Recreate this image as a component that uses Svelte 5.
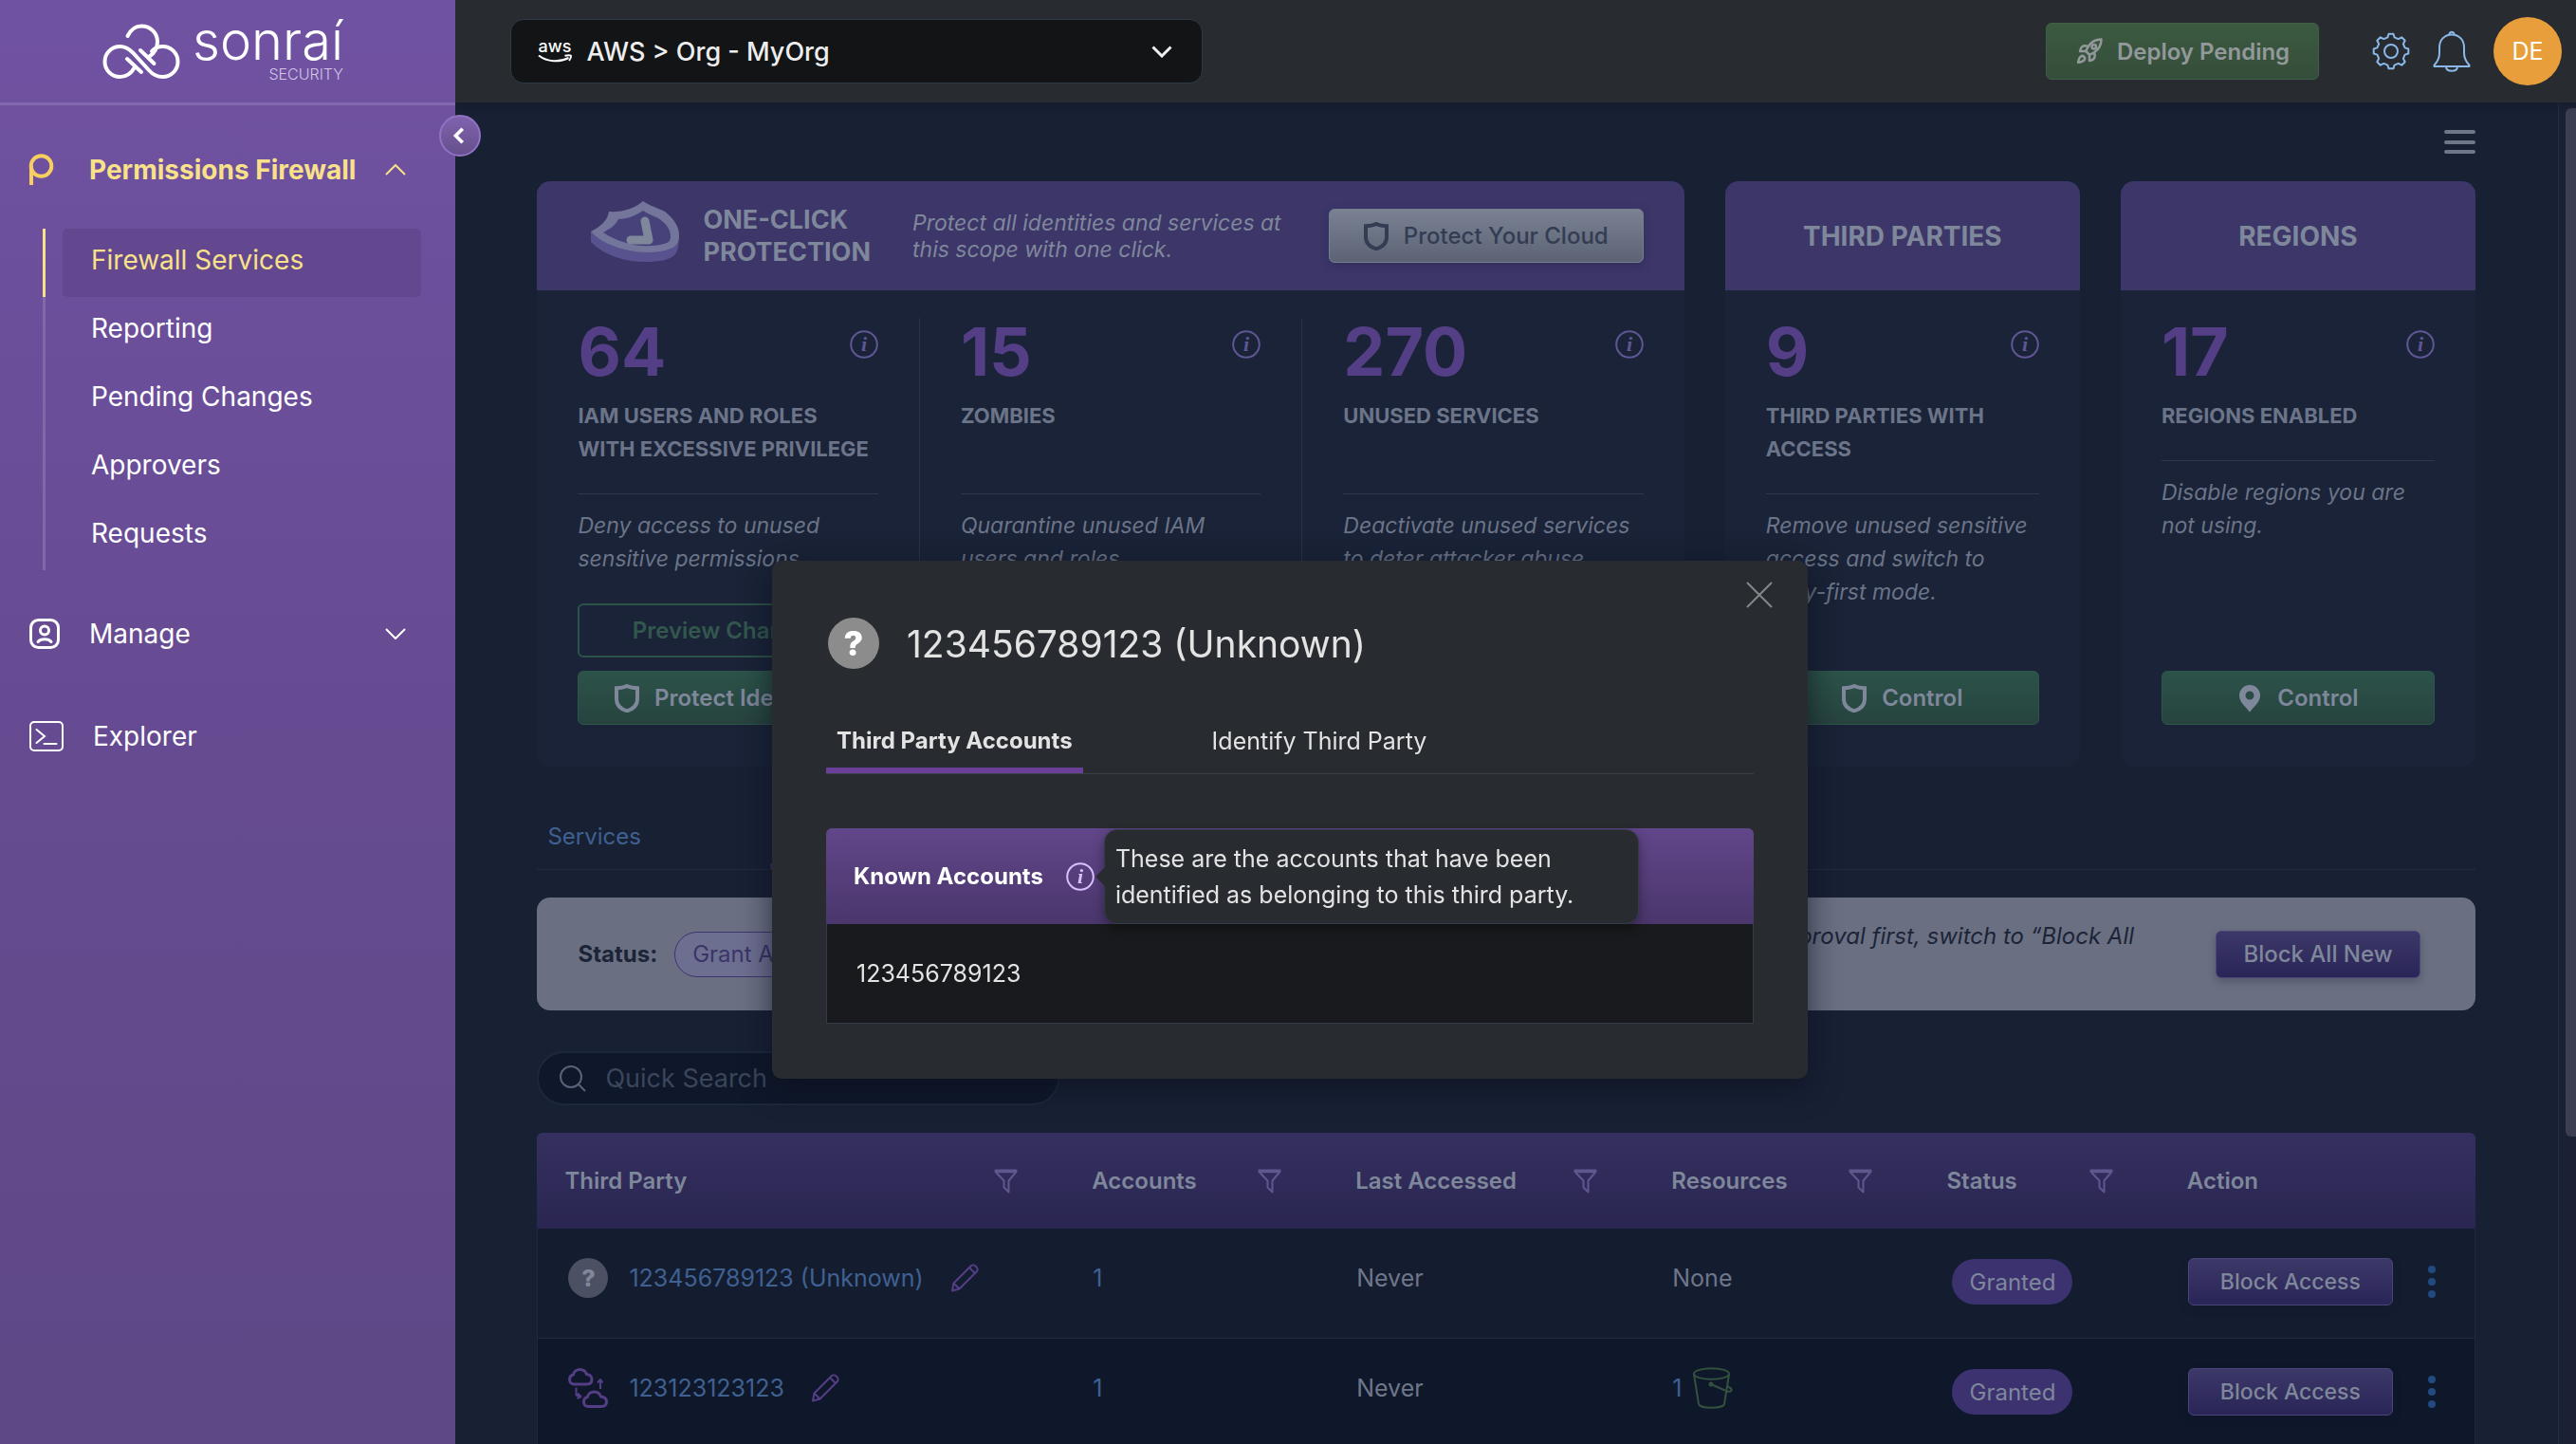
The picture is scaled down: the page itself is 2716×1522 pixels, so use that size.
<script>
  const menu = ['Firewall Services', 'Reporting', 'Pending Changes', 'Approvers', 'Requests'];

  const stats = [
    {
      value: 64,
      label: 'IAM users and roles with excessive privilege',
      text: 'Deny access to unused sensitive permissions.',
      preview: 'Preview Changes',
      action: 'Protect Identities',
      icon: 'shield'
    },
    { value: 15, label: 'Zombies', text: 'Quarantine unused IAM users and roles.' },
    { value: 270, label: 'Unused services', text: 'Deactivate unused services to deter attacker abuse.' }
  ];
  const thirdParties = {
    value: 9,
    label: 'Third parties with access',
    text: 'Remove unused sensitive access and switch to deny-first mode.',
    action: 'Control',
    icon: 'shield'
  };
  const regions = {
    value: 17,
    label: 'Regions enabled',
    text: 'Disable regions you are not using.',
    action: 'Control',
    icon: 'pin',
    short: true
  };

  const columns = ['Third Party', 'Accounts', 'Last Accessed', 'Resources', 'Status', 'Action'];
  const rows = [
    { name: '123456789123 (Unknown)', unknown: true, accounts: 1, last: 'Never', buckets: 0 },
    { name: '123123123123', unknown: false, accounts: 1, last: 'Never', buckets: 1 }
  ];

  // Cog outline: eight teeth, each with a flat top and sloped sides.
  const teeth = 8;
  const gear = Array.from({ length: teeth }, (_, i) => {
    const step = (Math.PI * 2) / teeth;
    return [[-0.31, 15], [-0.17, 18.5], [0.17, 18.5], [0.31, 15]]
      .map(([k, r]) => {
        const a = i * step + k * step - Math.PI / 2;
        return `${(20 + r * Math.cos(a)).toFixed(1)},${(20 + r * Math.sin(a)).toFixed(1)}`;
      })
      .join(' ');
  }).join(' ');

  let query = $state('');
  let scope = $state('AWS > Org - MyOrg');
</script>

{#snippet shield()}
  <svg class="i-shield" viewBox="0 0 26 30" aria-hidden="true">
    <path d="M13 2 C10.500 3.300 6 4.200 2 4.200 V16 C2 23 7 26.500 13 28.300 C19 26.500 24 23 24 16 V4.200 C20 4.200 15.500 3.300 13 2 Z" />
  </svg>
{/snippet}

{#snippet pin()}
  <svg class="i-pin" viewBox="0 0 26 30" aria-hidden="true">
    <path fill-rule="evenodd" d="M13 1 A11 11 0 0 0 2 12 C2 19 8 23 13 29.500 C18 23 24 19 24 12 A11 11 0 0 0 13 1 Z M13 7.500 A4.500 4.500 0 1 1 13 16.500 A4.500 4.500 0 1 1 13 7.500 Z" />
  </svg>
{/snippet}

{#snippet info()}
  <svg class="i-info" viewBox="0 0 30 30" aria-hidden="true">
    <circle cx="15" cy="15" r="13.800" />
    <text x="15" y="22" text-anchor="middle">i</text>
  </svg>
{/snippet}

{#snippet stat(s)}
  <div class="stat">
    <div class="stat-top">
      <strong class="number">{s.value}</strong>
      <button class="plain info-btn" aria-label="About {s.label}">{@render info()}</button>
    </div>
    <h3 class="label" class:short={s.short}>{s.label}</h3>
    <p class="desc">{s.text}</p>
    <div class="stat-actions">
      {#if s.preview}<button class="btn outline">{s.preview}</button>{/if}
      {#if s.action}
        <button class="btn green">
          {#if s.icon === 'pin'}{@render pin()}{:else}{@render shield()}{/if}
          {s.action}
        </button>
      {/if}
    </div>
  </div>
{/snippet}

<div class="shell">
  <aside class="sidebar">
    <div class="brand">
      <svg class="brand-mark" viewBox="0 0 80 58" aria-hidden="true">
        <path d="M33 46 C29 53 24 56 17.500 56 A16 16 0 0 1 17.500 24 C23 24 27 26.500 31 30.500 L48 49 C52 53.500 56 56 62.500 56 A16 16 0 0 0 62.500 24 C58 24 54 25.500 51 29" />
        <path d="M25.500 13 C29 6 34 2.500 40 2.500 C50 2.500 57 10 57 19 C57 26 54 31 48 35" />
        <path d="M39 28 L53.500 42 M25 37 L40 51" />
      </svg>
      <div class="wordmark">
        <span class="name">sonraí</span>
        <span class="sub">SECURITY</span>
      </div>
    </div>
    <button class="collapse" aria-label="Collapse menu">
      <svg viewBox="0 0 44 44" aria-hidden="true"><path d="M25 14 L17 22 L25 30" /></svg>
    </button>
    <nav class="nav" aria-label="Main">
      <button class="plain nav-item current">
        <svg class="nav-icon" viewBox="0 0 32 32" aria-hidden="true">
          <circle cx="12.500" cy="12" r="10.800" />
          <path d="M2 12 V32" />
        </svg>
        <span class="nav-text">Permissions Firewall</span>
        <svg class="nav-chevron" viewBox="0 0 22 12" aria-hidden="true"><path d="M1 11 L11 1 L21 11" /></svg>
      </button>
      <ul class="submenu">
        {#each menu as m, i}
          <li><a href="#{m.toLowerCase().replace(' ', '-')}" class:active={i === 0}>{m}</a></li>
        {/each}
      </ul>
      <button class="plain nav-item">
        <svg class="nav-icon person" viewBox="0 0 32 32" aria-hidden="true">
          <rect x="1.500" y="1.500" width="29" height="29" rx="8" />
          <circle cx="16" cy="12.500" r="4.500" />
          <path d="M9 24.500 C12 20.800 20 20.800 23 24.500" />
        </svg>
        <span class="nav-text">Manage</span>
        <svg class="nav-chevron" viewBox="0 0 22 12" aria-hidden="true"><path d="M1 1 L11 11 L21 1" /></svg>
      </button>
      <a class="nav-item explorer" href="#explorer">
        <svg class="nav-icon wide" viewBox="0 0 36 32" aria-hidden="true">
          <rect x="1" y="1" width="34" height="30" rx="4" />
          <path d="M7.500 9 L16 16 L7.500 23 M15.500 24 H28.500" />
        </svg>
        <span class="nav-text">Explorer</span>
      </a>
    </nav>
  </aside>

  <div class="page">
    <header class="topbar">
      <div class="scope">
        <svg class="aws" viewBox="0 0 36 23" aria-hidden="true">
          <text x="18" y="12" text-anchor="middle">aws</text>
          <path class="swoosh" d="M1 15.500 C10 22.500 23 23 32.500 18" />
          <path class="swoosh" d="M28.500 15.800 C32 15 35 15 35 16 C35.200 17.500 34.200 19.500 33 21" />
        </svg>
        <select aria-label="Scope" bind:value={scope}>
          <option>AWS &gt; Org - MyOrg</option>
        </select>
        <svg class="scope-chevron" viewBox="0 0 22 13" aria-hidden="true"><path d="M1.500 1.500 L11 11 L20.500 1.500" /></svg>
      </div>
      <button class="deploy">
        <svg viewBox="0 0 24 24" aria-hidden="true">
          <path d="M4.500 16.500c-1.500 1.260-2 5-2 5s3.740-.5 5-2c.71-.84.7-2.130-.09-2.910a2.180 2.180 0 0 0-2.910-.09z" />
          <path d="m12 15-3-3a22 22 0 0 1 2-3.950A12.880 12.880 0 0 1 22 2c0 2.720-.78 7.500-6 11a22.350 22.350 0 0 1-4 2z" />
          <path d="M9 12H4s.55-3.030 2-4c1.620-1.080 5 0 5 0M12 15v5s3.030-.55 4-2c1.080-1.620 0-5 0-5" />
          <circle cx="15.800" cy="8.200" r="1.800" />
        </svg>
        Deploy Pending
      </button>
      <div class="tools">
        <button class="plain tool" aria-label="Settings">
          <svg viewBox="0 0 40 40" aria-hidden="true"><polygon points={gear} /><circle cx="20" cy="20" r="7" /></svg>
        </button>
        <button class="plain tool" aria-label="Notifications">
          <svg viewBox="0 0 40 44" aria-hidden="true">
            <path d="M20 4.500 C12 4.500 7 10.500 7 18 V24 C7 29 5 33 1.500 36.800 V38 H38.500 V36.800 C35 33 33 29 33 24 V18 C33 10.500 28 4.500 20 4.500 Z" />
            <path d="M17.500 4.500 C17.500 0.800 22.500 0.800 22.500 4.500 M14 39 C15 44 25 44 26 39" />
          </svg>
        </button>
        <button class="avatar" aria-label="Account DE">DE</button>
      </div>
    </header>

    <div class="body">
      <main class="content">
        <div class="menu-row">
          <button class="plain burger" aria-label="Menu"><span></span><span></span><span></span></button>
        </div>

        <section class="cards">
          <article class="card">
            <header class="card-head protection">
              <svg class="badge" viewBox="0 0 94 64" aria-hidden="true">
                <path class="side" d="M0 32 V43 C14 57 34 64 58 64 C72 64 82 62 88 57 C92 53 93 45 93 34 Z" />
                <path class="face" d="M55 0 C60 4 70 7 78 11 C88 19 93 27 93 36 C93 44 90 48 84 50 C72 55 52 55 36 51 C20 47 8 41 0 32 C10 27 18 20 19 11 C32 12 46 8 55 0 Z" />
                <path class="inner" d="M55 10 C59 13 65 15 71 18 C80 24 84 30 84 37 C84 42 82 44 77 45 C66 48 52 48 41 45 C29 42 20 38 13 33 C21 29 27 24 29 19 C38 19 48 15 55 10 Z" />
                <path class="tick" d="M57 21 L61 41 H42" />
              </svg>
              <h2>ONE-CLICK<br />PROTECTION</h2>
              <p>Protect all identities and services at this scope with one click.</p>
              <button class="btn silver">{@render shield()}Protect Your Cloud</button>
            </header>
            <div class="stats">
              {#each stats as s}{@render stat(s)}{/each}
            </div>
          </article>
          <article class="card">
            <header class="card-head"><h2>THIRD PARTIES</h2></header>
            <div class="stats">{@render stat(thirdParties)}</div>
          </article>
          <article class="card">
            <header class="card-head"><h2>REGIONS</h2></header>
            <div class="stats">{@render stat(regions)}</div>
          </article>
        </section>

        <div class="tabs dim" role="tablist" aria-label="Sections">
          <button role="tab" aria-selected="false">Services</button>
          <button role="tab" aria-selected="true">Third Parties</button>
        </div>

        <section class="status">
          <b>Status:</b>
          <span class="pill outlined">Grant Access</span>
          <p>To require approval first, switch to “Block All<br />New”.</p>
          <button class="btn violet all">Block All New</button>
        </section>

        <label class="search">
          <svg viewBox="0 0 28 28" aria-hidden="true"><circle cx="12" cy="12" r="11" /><path d="M20 20 L27 27" /></svg>
          <input type="search" placeholder="Quick Search" aria-label="Quick Search" bind:value={query} />
        </label>

        <div class="grid-wrap">
          <table class="grid">
            <colgroup>
              <col class="c1" /><col class="c2" /><col class="c3" /><col class="c4" /><col class="c5" /><col class="c6" />
            </colgroup>
            <thead>
              <tr>
                {#each columns as c, i}
                  <th scope="col">
                    <div class="th">
                      {c}
                      {#if i < columns.length - 1}
                        <button class="plain filter" aria-label="Filter {c}">
                          <svg viewBox="0 0 25 26" aria-hidden="true"><path d="M1.500 1.500 H23.500 V3 L15.500 12.500 V24.500 L10.500 19.500 V12.500 L1.500 3 Z M2 3.200 H23" /></svg>
                        </button>
                      {/if}
                    </div>
                  </th>
                {/each}
              </tr>
            </thead>
            <tbody>
              {#each rows as r}
                <tr>
                  <td>
                    <div class="party">
                      {#if r.unknown}
                        <span class="unknown">?</span>
                      {:else}
                        <svg class="clouds" viewBox="0 0 42 42" aria-hidden="true">
                          <path d="M6.500 17 C3 17 1.500 14.500 1.500 12 C1.500 9.500 3 7.500 5.500 7 C6 3.500 9 1.500 12.500 1.500 C16 1.500 18.500 3.500 19.500 6.500 C23 7 25 9 25 12 C25 15 23 17 19.500 17 Z" />
                          <path d="M21.500 40.500 C18 40.500 16.500 38 16.500 35.500 C16.500 33 18 31 20.500 30.500 C21 27 24 25 27.500 25 C31 25 33.500 27 34.500 30 C38 30.500 40.500 32.500 40.500 35.500 C40.500 38.500 38.500 40.500 35 40.500 Z" />
                          <path d="M34 22 V13 M31 15.500 L34 12 L36.500 15.500 M8.500 20.500 V28.500 L13 30 M10 26.500 L13.500 30 L9.500 32" />
                        </svg>
                      {/if}
                      <a href="#party">{r.name}</a>
                      <button class="plain pencil" aria-label="Rename {r.name}">
                        <svg viewBox="0 0 30 30" aria-hidden="true">
                          <path d="M2 28.500 L3.500 20.500 L21.500 2.500 C23 1 25 1 26.500 2.500 L27.500 3.500 C29 5 29 7 27.500 8.500 L9.500 26.500 Z M3.500 20.500 L9.500 26.500 M20 4 L26 10" />
                        </svg>
                      </button>
                    </div>
                  </td>
                  <td><div class="cell"><a href="#accounts">{r.accounts}</a></div></td>
                  <td><div class="cell">{r.last}</div></td>
                  <td>
                    <div class="cell res">
                      {#if r.buckets}
                        <a href="#resources">{r.buckets}</a>
                        <svg class="bucket" viewBox="0 0 42 44" aria-hidden="true">
                          <ellipse cx="19.500" cy="7" rx="18.500" ry="5.800" />
                          <path d="M1 7.500 L6 39 C7 44 32 44 33 39 L38 7.500 M19 18 L36 25.500 C42 27 42 23 37 20.500" />
                          <circle class="dot" cx="19" cy="18" r="1.500" />
                        </svg>
                      {:else}None{/if}
                    </div>
                  </td>
                  <td><div class="acts"><span class="pill solid">Granted</span></div></td>
                  <td>
                    <div class="acts">
                      <button class="btn violet">Block Access</button>
                      <button class="plain more" aria-label="More actions"><i></i><i></i><i></i></button>
                    </div>
                  </td>
                </tr>
              {/each}
            </tbody>
          </table>
        </div>
      </main>
      <div class="track" aria-hidden="true"><span class="thumb"></span></div>
    </div>
  </div>
</div>

<div class="overlay">
  <div class="modal" role="dialog" aria-modal="true" aria-labelledby="modal-title">
    <button class="plain close" aria-label="Close">
      <svg viewBox="0 0 28 28" aria-hidden="true"><path d="M1 1 L27 27 M27 1 L1 27" /></svg>
    </button>
    <header class="modal-head">
      <span class="unknown big">?</span>
      <h1 id="modal-title">123456789123 (Unknown)</h1>
    </header>
    <div class="tabs" role="tablist" aria-label="Third party">
      <button role="tab" aria-selected="true">Third Party Accounts</button>
      <button role="tab" aria-selected="false">Identify Third Party</button>
    </div>
    <table class="known">
      <thead>
        <tr>
          <th scope="col">
            <div class="known-head">
              Known Accounts
              <span class="tip-anchor">
                {@render info()}
                <span class="tip" role="tooltip">These are the accounts that have been identified as belonging to this third party.</span>
              </span>
            </div>
          </th>
        </tr>
      </thead>
      <tbody><tr><td>123456789123</td></tr></tbody>
    </table>
  </div>
</div>

<style>
  :global(body) {
    background: #182034;
    overflow: hidden;
  }
  .shell, .overlay {
    font-family: Inter, 'Noto Sans', sans-serif;
    font-size: 25px;
  }
  .shell *, .overlay * { box-sizing: border-box; }
  .shell :is(h2, h3, p, ul), .overlay h1 { margin: 0; padding: 0; }
  button, input, select { font: inherit; color: inherit; }
  button { cursor: pointer; }
  a { text-decoration: none; color: inherit; }
  svg { display: block; flex: none; fill: none; }
  .plain { border: 0; background: none; padding: 0; }

  .shell { display: flex; height: 100vh; overflow: hidden; }

  /* Sidebar */
  .sidebar {
    position: relative;
    z-index: 2;
    flex: 0 0 480px;
    background: linear-gradient(#7052a2, #664b92 50%, #5e4885);
    color: #fff;
    font-size: 28px;
  }
  .brand {
    display: flex;
    align-items: center;
    gap: 14px;
    height: 111px;
    padding-left: 109px;
    border-bottom: 3px solid #8468ae;
  }
  .brand-mark { width: 80px; height: 58px; stroke: #fff; stroke-width: 4; stroke-linecap: round; overflow: visible; }
  .wordmark { display: flex; flex-direction: column; align-items: flex-end; padding-bottom: 6px; }
  .name { font-size: 56px; line-height: 54px; font-weight: 300; }
  .sub { font-size: 16px; line-height: 16px; font-weight: 300; color: #d3c6e6; }
  .collapse {
    position: absolute;
    top: 121px;
    right: -27px;
    width: 44px;
    height: 44px;
    padding: 0;
    border: 2px solid #9173c4;
    border-radius: 50%;
    background: linear-gradient(#8062ae, #66508c);
  }
  .collapse svg { width: 100%; stroke: #fff; stroke-width: 4; }
  .nav { padding-top: 32px; }
  .nav-item {
    display: flex;
    align-items: center;
    gap: 31px;
    width: 100%;
    height: 72px;
    padding: 0 52px 0 31px;
    color: #fff;
    text-align: left;
    white-space: nowrap;
  }
  .nav-text { flex: 1; min-width: 0; }
  .nav-icon { width: 32px; height: 32px; stroke: currentColor; stroke-width: 3; stroke-linecap: round; }
  .nav-icon.wide { width: 36px; stroke-width: 2; }
  .nav-chevron { width: 22px; height: 12px; stroke: currentColor; stroke-width: 2; }
  .current { color: #f9e189; font-weight: 700; }
  .current .nav-icon { stroke-linecap: butt; stroke-width: 4; color: #f7cf60; overflow: visible; }
  .explorer { margin-top: 36px; }
  .submenu {
    list-style: none;
    margin: 26px 36px 31px 45px !important;
    border-left: 3px solid #8367ab;
  }
  .submenu a {
    position: relative;
    display: flex;
    align-items: center;
    height: 72px;
    margin-left: 18px;
    padding: 0 0 6px 30px;
    border-radius: 5px;
  }
  .submenu .active { background: #63488f; color: #f9e189; }
  .submenu .active::before {
    content: '';
    position: absolute;
    left: -21px;
    top: 0;
    bottom: 0;
    width: 3px;
    background: #f9e189;
  }

  /* Top bar */
  .page { flex: 1; min-width: 0; display: flex; flex-direction: column; }
  .topbar {
    position: relative;
    z-index: 1;
    flex: 0 0 108px;
    display: flex;
    align-items: center;
    padding: 0 15px 0 58px;
    background: #282b2f;
    box-shadow: 0 2px 8px #10162680;
  }
  .scope {
    display: flex;
    align-items: center;
    gap: 15px;
    flex: 0 1 730px;
    height: 68px;
    padding: 0 31px 0 28px;
    border: 1px solid #303a47;
    border-radius: 14px;
    background: #121416;
    color: #eee;
    font-size: 27px;
    font-weight: 500;
  }
  .scope select { flex: 1; min-width: 0; border: 0; padding: 0; background: none; appearance: none; outline: 0; }
  .aws { width: 36px; height: 23px; overflow: visible; }
  .aws text { font: 500 18px Inter, sans-serif; fill: #fff; }
  .aws .swoosh { stroke: #fff; stroke-width: 2; }
  .scope-chevron { width: 22px; height: 13px; stroke: #eee; stroke-width: 3; }
  .deploy {
    display: flex;
    align-items: center;
    justify-content: center;
    gap: 14px;
    width: 288px;
    height: 60px;
    margin-left: auto;
    padding: 0;
    border: 1px solid #3e6145;
    border-radius: 6px;
    background: linear-gradient(#3b5a40, #354d3b);
    color: #93999a;
    font-size: 24px;
    font-weight: 600;
  }
  .deploy svg { width: 30px; height: 30px; stroke: currentColor; stroke-width: 2; stroke-linejoin: round; }
  .tools { display: flex; align-items: center; gap: 24px; margin-left: 56px; }
  .tool svg { width: 40px; stroke: #8bb8ea; stroke-width: 2; stroke-linejoin: round; }
  .avatar {
    width: 72px;
    height: 72px;
    padding: 0;
    border: 0;
    border-radius: 50%;
    background: #e89f3b;
    color: #fff;
    font-size: 25px;
  }

  /* Content */
  .body { flex: 1; min-height: 0; display: flex; background: #182034; }
  .content { flex: 1; min-width: 0; padding: 29px 87px 0 86px; overflow: hidden; }
  .track { flex: 0 0 19px; padding: 6px 0 0 7px; background: #1b2135; border-left: 1px solid #252d42; }
  .thumb { display: block; height: 77%; border-radius: 6px 0 0 6px; background: #3c3f52; }
  .menu-row { display: flex; justify-content: flex-end; margin-bottom: 29px; }
  .burger { display: flex; flex-direction: column; justify-content: space-between; width: 33px; height: 25px; }
  .burger span { height: 4px; border-radius: 2px; background: #6e7688; }

  .cards { display: grid; grid-template-columns: 1209fr 374fr 374fr; gap: 43px; }
  .card { display: flex; flex-direction: column; border-radius: 14px; background: #1a2337; overflow: hidden; }
  .card-head {
    display: flex;
    align-items: center;
    justify-content: center;
    height: 115px;
    background: #3c3669;
    color: #7f879b;
  }
  h2 { font-size: 28px; line-height: 34px; font-weight: 700; }
  .protection { justify-content: flex-start; padding: 0 43px 0 57px; }
  .protection h2 { margin-left: 24px; font-size: 27px; }
  .protection p { flex: 1; margin-left: 44px; font-size: 23px; line-height: 28px; font-style: italic; }
  .protection p { max-width: 400px; }
  .protection .btn { margin-left: auto; }
  .badge { width: 94px; height: 64px; margin-bottom: 10px; }
  .badge .side { fill: #58528f; }
  .badge .face { fill: #74759a; }
  .badge .inner { fill: #474279; }
  .badge .tick { stroke: #7f879b; stroke-width: 9; stroke-linecap: round; stroke-linejoin: round; }

  .stats { flex: 1; display: flex; padding: 29px 0 44px; }
  .stat { flex: 1 1 0; min-width: 0; display: flex; flex-direction: column; padding: 0 43px; min-height: 429px; }
  .stat + .stat { border-left: 1px solid #2a3246; }
  .stat-top { display: flex; justify-content: space-between; align-items: flex-start; }
  .number { font-size: 70px; line-height: 72px; font-weight: 700; color: #543e86; }
  .info-btn { margin-top: 13px; color: #5f5794; }
  .i-info { width: 30px; height: 30px; }
  .i-info circle { stroke: currentColor; stroke-width: 2; }
  .i-info text { font: italic 700 22px 'Liberation Serif', serif; fill: currentColor; }
  .label {
    min-height: 100px;
    margin-top: 14px !important;
    font-size: 22px;
    line-height: 35px;
    font-weight: 700;
    text-transform: uppercase;
    color: #6b7488;
    border-bottom: 1px solid #2e374d;
    padding-bottom: 29px !important;
  }
  .label.short { min-height: 0; }
  .desc { margin-top: 16px !important; font-size: 23px; line-height: 35px; font-style: italic; color: #6b7488; }
  .stat-actions { display: flex; flex-direction: column; gap: 14px; margin-top: auto; }

  .btn {
    display: flex;
    align-items: center;
    justify-content: center;
    gap: 16px;
    height: 57px;
    padding: 0;
    border-radius: 6px;
    border: 1px solid transparent;
    font-size: 24px;
    font-weight: 600;
    white-space: nowrap;
  }
  .i-shield { width: 26px; height: 30px; stroke: currentColor; stroke-width: 4; }
  .i-pin { width: 26px; height: 30px; fill: currentColor; }
  .btn.green { background: linear-gradient(#2c5349, #27433f); border-color: #2d554a; color: #7f879b; }
  .btn.outline { background: none; border: 2px solid #2c5349; color: #32584d; }
  .btn.silver {
    width: 332px;
    border-color: #757d90;
    background: linear-gradient(#7a8193, #5b6374);
    box-shadow: 0 3px 8px #2a285080;
    color: #333c52;
    font-weight: 500;
  }
  .btn.violet {
    width: 216px;
    height: 50px;
    border-color: #4b467a;
    background: linear-gradient(#3c3868, #2a2557);
    box-shadow: 0 4px 8px #10162640;
    color: #7f879b;
    font-weight: 500;
  }
  .acts .btn.violet { font-size: 23px; }

  /* Tabs */
  .tabs { display: flex; gap: 125px; border-bottom: 1px solid #3a4048; color: #e3e3e3; }
  .tabs button {
    height: 54px;
    padding: 0 11px 8px;
    border: 0;
    border-bottom: 6px solid transparent;
    background: none;
    font-size: 25px;
    line-height: 40px;
  }
  .tabs [aria-selected='true'] { font-size: 24px; font-weight: 700; border-color: #6a3f98; }
  .tabs.dim { margin-top: 54px; border-color: #212b41; color: #3f6191; }
  .tabs.dim button { font-size: 24px; }
  .tabs.dim [aria-selected='true'] { border-color: #3c2a6b; color: #7f879b; }

  /* Status */
  .status {
    display: flex;
    align-items: center;
    height: 119px;
    margin-top: 29px;
    padding: 0 58px 0 43px;
    border-radius: 14px;
    background: #6a7082;
    color: #1c2438;
  }
  .status b { font-size: 24px; font-weight: 700; }
  .status p { margin-left: auto; margin-right: 86px; font-size: 24px; line-height: 38px; font-style: italic; }
  .pill { display: flex; align-items: center; height: 48px; border-radius: 24px; padding: 0 18px; white-space: nowrap; }
  .pill.outlined { margin-left: 18px; border: 1px solid #3c3570; background: #6d6f90; color: #3a3468; font-size: 24px; }
  .pill.solid { margin-left: 5px; background: #3c3270; color: #7f879b; font-size: 24px; }

  /* Search */
  .search {
    display: flex;
    align-items: center;
    gap: 20px;
    width: 551px;
    height: 57px;
    margin: 43px 0 29px;
    padding: 0 22px;
    border: 2px solid #1e283d;
    border-radius: 29px;
    background: #0f172a;
  }
  .search svg { width: 28px; height: 28px; stroke: #59627a; stroke-width: 2; }
  .search input { flex: 1; min-width: 0; border: 0; outline: 0; padding: 0; background: none; font-size: 27px; color: #7f879b; }
  .search input::placeholder { color: #3b455b; }

  /* Table */
  .grid-wrap { border-radius: 6px 6px 0 0; overflow: hidden; }
  table { width: 100%; border-collapse: separate; border-spacing: 0; }
  .grid { table-layout: fixed; color: #6e768a; }
  .c1 { width: 27.2%; }
  .c2 { width: 13.6%; }
  .c3 { width: 16.3%; }
  .c4 { width: 14.2%; }
  .c5 { width: 12.4%; }
  .c6 { width: 16.3%; }
  .grid th {
    height: 101px;
    padding: 0 49px 0 29px;
    background: linear-gradient(#353060, #2a2651);
    color: #7f879b;
    font-size: 24px;
    font-weight: 600;
    text-align: left;
  }
  .th { display: flex; align-items: center; justify-content: space-between; }
  .filter svg { width: 25px; height: 26px; stroke: #5f588e; stroke-width: 2; stroke-linejoin: round; }
  .grid td { height: 116px; padding: 31px 0 0 30px; vertical-align: top; background: #141c30; border-bottom: 1px solid #222b40; }
  .grid td:first-child { padding-left: 32px; border-left: 1px solid #1f283d; }
  .grid td:last-child { border-right: 1px solid #1f283d; }
  .grid tbody tr:nth-child(even) td { background: #0f172a; }
  .cell, .party { display: flex; align-items: center; height: 42px; }
  .party { gap: 22px; }
  .party a, .cell a { color: #3f6191; }
  .pencil { margin-left: 6px; }
  .pencil svg { width: 30px; height: 30px; stroke: #543e86; stroke-width: 2; stroke-linejoin: round; }
  .clouds { width: 42px; height: 42px; stroke: #543e86; stroke-width: 3; stroke-linejoin: round; }
  .clouds path:last-child { stroke-width: 2; }
  .res { gap: 12px; }
  .bucket { width: 42px; height: 44px; stroke: #33513f; stroke-width: 2; }
  .bucket .dot { fill: #33513f; }
  .acts { display: flex; align-items: center; height: 50px; }
  .more { display: flex; flex-direction: column; justify-content: space-between; width: 8px; height: 34px; margin-left: 37px; }
  .more i { width: 8px; height: 8px; border-radius: 50%; background: #234a80; }
  .unknown {
    display: flex;
    align-items: center;
    justify-content: center;
    flex: none;
    width: 42px;
    height: 42px;
    border-radius: 50%;
    background: #4b5162;
    color: #7f879b;
    font-size: 25px;
    font-weight: 800;
  }

  /* Modal */
  .overlay {
    position: fixed;
    inset: 0;
    z-index: 3;
    display: flex;
    align-items: flex-start;
    justify-content: center;
    padding: 591px 0 0 4px;
    pointer-events: none;
  }
  .modal {
    position: relative;
    width: 1092px;
    padding: 60px 57px 58px;
    border-radius: 10px;
    background: #282b2f;
    box-shadow: 0 8px 32px #0a101fb0;
    color: #e3e3e3;
    pointer-events: auto;
  }
  .close { position: absolute; top: 22px; right: 37px; }
  .close svg { width: 28px; height: 28px; stroke: #85878a; stroke-width: 2; }
  .modal-head { display: flex; align-items: center; gap: 29px; height: 54px; padding-left: 2px; margin-bottom: 56px; }
  h1 { font-size: 39px; font-weight: 400; }
  .unknown.big { width: 54px; height: 54px; background: #8c8c8c; color: #fff; font-size: 36px; }
  .known { margin-top: 57px; }
  .known th {
    height: 101px;
    padding: 0 29px;
    border-radius: 6px 6px 0 0;
    background: linear-gradient(#614689, #4a366c);
    color: #fff;
    font-size: 24px;
    font-weight: 700;
    text-align: left;
  }
  .known td { height: 105px; padding: 0 31px; border: 1px solid #343c49; border-top: 0; background: #191a1d; }
  .known-head { display: flex; align-items: center; gap: 24px; }
  .tip-anchor { position: relative; color: #d9bfff; }
  .tip {
    position: absolute;
    left: 40px;
    top: 50%;
    translate: 0 -50%;
    width: 564px;
    padding: 11px;
    border: 1px solid #343c49;
    border-radius: 14px;
    background: #282b2f;
    box-shadow: 0 4px 12px #00000060;
    color: #e3e3e3;
    font-size: 25px;
    font-weight: 400;
    line-height: 38px;
  }
  .tip::before {
    content: '';
    position: absolute;
    left: -10px;
    top: 50%;
    translate: 0 -50%;
    border: 10px solid transparent;
    border-left: 0;
    border-right-color: #282b2f;
  }
</style>
